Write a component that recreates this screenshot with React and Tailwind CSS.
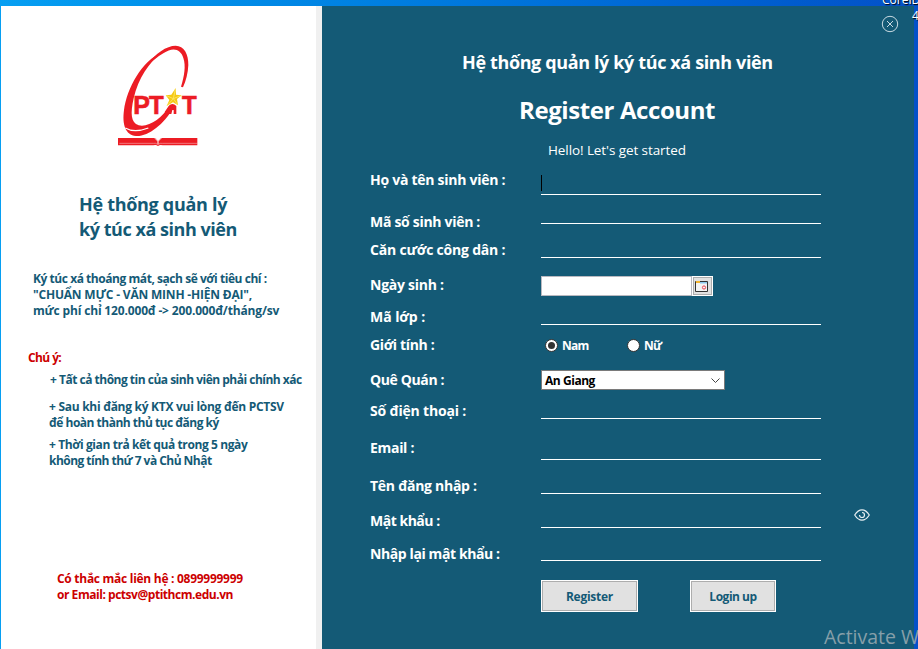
const labels = [
  ["Họ và tên sinh viên :", "-mt-px tracking-[-0.27px]"],
  ["Mã số sinh viên :", "mt-[22px] tracking-[-0.3px]"],
  ["Căn cước công dân :", "mt-2 tracking-[-0.2px]"],
  ["Ngày sinh :", "mt-[15px] tracking-[-0.25px]"],
  ["Mã lớp :", "mt-3 tracking-[-0.05px]"],
  ["Giới tính :", "mt-2 tracking-[-0.35px]"],
  ["Quê Quán :", "mt-[15px] tracking-[-0.38px]"],
  ["Số điện thoại :", "mt-[11px] tracking-[-0.18px]"],
  ["Email :", "mt-[17px] tracking-[-0.3px]"],
  ["Tên đăng nhập :", "mt-[18px] tracking-[-0.27px]"],
  ["Mật khẩu :", "mt-[15px] tracking-[-0.48px]"],
  ["Nhập lại mật khẩu :", "mt-[13px] tracking-[-0.4px]"],
];

function Logo() {
  return (
    <svg className="ml-[99px] mt-6 h-[130px] w-[120px] shrink-0" viewBox="0 0 360 390">
      <g fill="#ec1c24">
        <path d="M140 108C165 70 200 47 227 47C252 47 266 72 265 105C264 130 258 152 249 172L243 170C253 138 258 108 250 84C242 56 218 50 190 70C172 81 156 94 140 108Z" />
        <path d="M187 66C147 97 115 145 101 205C91 250 92 278 116 286C146 293 185 266 210 226L222 231C190 285 145 320 108 318C76 315 66 283 72 240C81 175 125 93 187 66Z" />
        <path d="M54 324H162Q169 325 174 332Q180 325 187 324H292V346H188Q180 343 174 348Q168 343 160 346H54Z" />
        <path d="M206 228Q217 216 229 228V252H221V240H217L214 252H205V240L198 250L194 246Z" />
      </g>
      <path d="M76 294Q103 310 145 294" fill="none" stroke="#fff" strokeWidth="4" />
      <path d="M58 340H160Q168 338 174 344Q180 338 188 340H292" fill="none" stroke="#fff" strokeWidth="2" opacity=".6" />
      <path d="M166 326L174 334L182 326M174 334V342" fill="none" stroke="#fff" strokeWidth="3" />
      <g fill="#ec1c24" stroke="#ec1c24" strokeWidth="2" fontFamily="Liberation Sans, sans-serif" fontWeight="700" fontSize="80">
        <text x="100" y="251" textLength="50" lengthAdjust="spacingAndGlyphs">P</text>
        <text x="147" y="251" textLength="44" lengthAdjust="spacingAndGlyphs">T</text>
        <text x="246" y="251" textLength="44" lengthAdjust="spacingAndGlyphs">T</text>
      </g>
      <path d="M227 174L228 194L245 196L231 207L234 226L219 217L200 228L208 210L197 196L214 194Z" fill="#f5c814" />
      <path d="M226 178L220 206L242 197M220 206L233 224M220 206L202 226M220 206L199 197" fill="none" stroke="#fbe96a" strokeWidth="2.5" />
    </svg>
  );
}

function Line({ className = "" }) {
  return <input className={"block w-[280px] border-b border-white bg-transparent outline-none " + className} />;
}

export default function App() {
  return (
    <div className="relative h-[649px] w-[918px] overflow-hidden bg-linear-to-r from-[#079ff2] to-[#0450c8] pt-1.5 font-['Open_Sans','Noto_Sans',sans-serif]">
      <div className="flex h-[643px] w-[914px] pl-px">
        <aside className="flex w-[321px] flex-col items-start border-r-6 border-[#f0f0f0] bg-white text-xs leading-4 font-bold whitespace-nowrap text-[#145a76]">
          <Logo />
          <h2 className="ml-[78px] mt-8 text-[18px] leading-[25px]">
            <span className="block tracking-[-0.3px]">Hệ thống quản lý</span>
            <span className="block tracking-[-0.46px]">ký túc xá sinh viên</span>
          </h2>
          <p className="ml-8 mt-[29px]">
            <span className="block tracking-[-0.45px]">Ký túc xá thoáng mát, sạch sẽ với tiêu chí :</span>
            <span className="block tracking-[-0.2px]">"CHUẨN MỰC - VĂN MINH -HIỆN ĐẠI",</span>
            <span className="block tracking-[-0.16px]">mức phí chỉ 120.000đ -&gt; 200.000đ/tháng/sv</span>
          </p>
          <p className="ml-[27px] mt-[31px] tracking-[-0.6px] text-[#cc0000]">Chú ý:</p>
          <p className="ml-[49px] mt-1.5 tracking-[-0.5px]">+ Tất cả thông tin của sinh viên phải chính xác</p>
          <p className="ml-12 mt-[11px]">
            <span className="block tracking-[-0.28px]">+ Sau khi đăng ký KTX vui lòng đến PCTSV</span>
            <span className="block tracking-[-0.5px]">để hoàn thành thủ tục đăng ký</span>
          </p>
          <p className="ml-12 mt-1.5">
            <span className="block tracking-[-0.4px]">+ Thời gian trả kết quả trong 5 ngày</span>
            <span className="block tracking-[-0.53px]">không tính thứ 7 và Chủ Nhật</span>
          </p>
          <p className="ml-14 mt-[102px] text-[#cc0000]">
            <span className="block tracking-[-0.28px]">Có thắc mắc liên hệ : 0899999999</span>
            <span className="block tracking-[-0.46px]">or Email: pctsv@ptithcm.edu.vn</span>
          </p>
        </aside>
        <main className="w-[592px] bg-[#145a76] pl-12 whitespace-nowrap text-white">
          <h3 className="ml-[92px] mt-11 text-[18px] leading-6 font-bold tracking-[-0.37px]">Hệ thống quản lý ký túc xá sinh viên</h3>
          <h1 className="ml-[149px] mt-5 text-2xl leading-8 font-bold tracking-[-0.41px]">Register Account</h1>
          <p className="ml-[178px] mt-[14px] text-[13.5px] leading-5 tracking-[-0.09px]">Hello! Let's get started</p>
          <div className="mt-[11px] flex">
            <div className="w-[171px] text-sm leading-5 font-bold">
              {labels.map(([text, style]) => (
                <div key={text} className={style}>{text}</div>
              ))}
            </div>
            <div className="flex flex-col">
              <div className="flex h-6 w-[280px] items-center border-b border-white"><span className="h-4 w-px bg-black" /></div>
              <Line className="h-[29px]" />
              <Line className="h-[34px]" />
              <div className="mt-[18px] flex h-5 w-[172px]">
                <div className="w-[151px] border border-[#b9b9c0] bg-white" />
                <button className="flex w-[21px] items-center border border-white bg-[#e1e1e1] pl-0.5 outline -outline-offset-2 outline-[#adadad]">
                  <svg className="h-[11px] w-[13px]" viewBox="0 0 13 11">
                    <path d="M.5.5h12v10H.5z" fill="#f4f4f4" stroke="#333" />
                    <path d="M1 0h4v2H1z" fill="#f5b52e" />
                    <path d="M5 1h7v1.500H5z" fill="#8cc8ee" />
                    <circle cx="9" cy="6.5" r="1.6" fill="none" stroke="#e84050" />
                  </svg>
                </button>
              </div>
              <Line className="h-[29px]" />
              <div className="mt-[11px] flex h-5 items-center pl-1 text-xs font-bold tracking-[-0.8px]">
                <span className="mb-px flex size-[13px] items-center justify-center rounded-full border border-[#333] bg-white"><span className="size-[7px] rounded-full bg-[#333]" /></span>
                <span className="ml-1 w-[65px]">Nam</span>
                <span className="mb-px size-[13px] rounded-full border border-[#333] bg-white" />
                <span className="ml-1">Nữ</span>
              </div>
              <div className="mt-[14px] flex h-5 w-[184px] items-center justify-between border border-[#7a7a7a] bg-white pr-1 pl-[3px] text-xs font-bold tracking-[-0.45px] text-black">
                <span className="pt-0.5">An Giang</span>
                <svg className="h-[5px] w-[9px]" viewBox="0 0 9 5"><path d="M.5.5l4 4 4-4" fill="none" stroke="#444" /></svg>
              </div>
              <Line className="h-[29px]" />
              <Line className="h-[41px]" />
              <Line className="h-[34px]" />
              <Line className="h-[34px]" />
              <Line className="h-[33px]" />
              <div className="mt-[19px] flex gap-[52px] text-xs font-bold text-[#145a76]">
                <button className="h-8 w-[97px] border border-white bg-[#e1e1e1] pt-0.5 tracking-[-0.26px] outline -outline-offset-2 outline-[#adadad]">Register</button>
                <button className="h-8 w-[86px] border border-white bg-[#e1e1e1] pt-0.5 tracking-[-0.48px] outline -outline-offset-2 outline-[#adadad]">Login up</button>
              </div>
            </div>
          </div>
        </main>
      </div>
      <svg className="absolute left-[881px] top-[15px] size-[18px]" viewBox="0 0 18 18" fill="none" stroke="#c9dae2"><circle cx="9" cy="9" r="7.7" /><path d="M6 6l6 6M12 6l-6 6" /></svg>
      <svg className="absolute left-[854px] top-[509px] h-3 w-4" viewBox="0 0 16 12" fill="none" stroke="#e8eff2" strokeWidth="1.2"><path d="M.7 6Q4 .8 8 .8T15.300 6Q12 11.200 8 11.200T.7 6Z" /><path d="M8 3.500A2.500 2.500 0 1 1 5.500 6" /></svg>
      <span className="absolute left-[882px] -top-2 text-xs leading-4 whitespace-nowrap text-white [text-shadow:1px_1px_1px_#000]">CorelD</span>
      <span className="absolute left-[912px] top-2 text-xs leading-4 text-white [text-shadow:1px_1px_1px_#000]">4</span>
      <span className="absolute left-[824px] top-[624px] text-[19.5px] leading-[26px] whitespace-nowrap text-[#869fa9]">Activate W</span>
    </div>
  );
}
